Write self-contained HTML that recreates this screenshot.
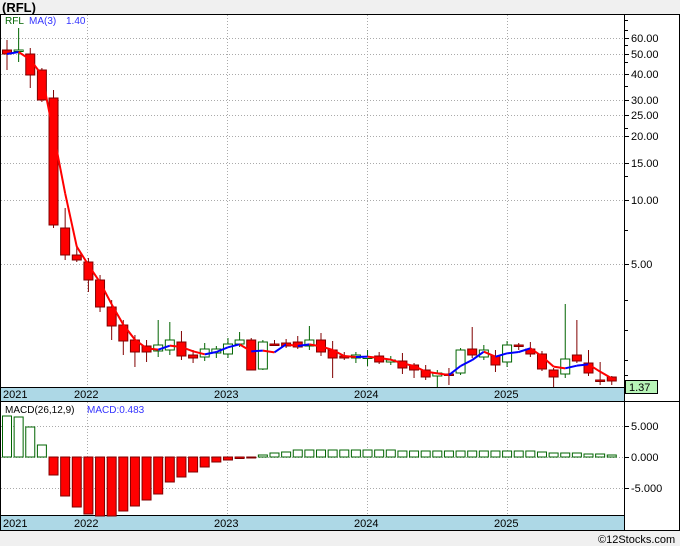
<!DOCTYPE html><html><head><meta charset="utf-8"><style>
body{margin:0;background:#f0f0f0;width:680px;height:546px;overflow:hidden;font-family:"Liberation Sans",sans-serif}
</style></head><body>
<svg id="s" width="680" height="546" xmlns="http://www.w3.org/2000/svg" font-family="Liberation Sans, DejaVu Sans, sans-serif" style="display:block">
<text x="2" y="12" font-size="13" font-weight="bold">(RFL)</text>
<rect x="0.5" y="14.5" width="679" height="516" fill="#fff" stroke="#000"/>
<rect x="1" y="387" width="623" height="14" fill="#add8e6"/>
<rect x="1" y="516" width="623" height="14" fill="#add8e6"/>
<line x1="0" y1="387.5" x2="624" y2="387.5" stroke="#000"/>
<line x1="0" y1="401.5" x2="680" y2="401.5" stroke="#000"/>
<line x1="0" y1="515.5" x2="624" y2="515.5" stroke="#000"/>
<line x1="624.5" y1="14" x2="624.5" y2="530" stroke="#000"/>
<g id="grid" stroke="#aaa" stroke-dasharray="1,2"></g>
<g id="c"></g>
<g font-size="11" fill="#000">
<text x="3" y="398">2021</text><text x="74" y="398">2022</text><text x="214" y="398">2023</text><text x="354" y="398">2024</text><text x="494" y="398">2025</text>
<text x="3" y="527">2021</text><text x="74" y="527">2022</text><text x="214" y="527">2023</text><text x="354" y="527">2024</text><text x="494" y="527">2025</text>
</g>
<text x="5" y="24" font-size="10" fill="#006400">RFL</text><text x="29" y="24" font-size="10" fill="#3333ff">MA(3)</text><text x="66" y="24" font-size="10" fill="#3333ff">1.40</text>
<text x="5" y="413" font-size="10" fill="#000">MACD(26,12,9)</text><text x="87" y="413" font-size="10" fill="#3333ff">MACD:0.483</text>
<rect x="625.5" y="380.5" width="32" height="13" fill="#b8f5b8" stroke="#000"/>
<text x="629" y="391" font-size="11">1.37</text>
<text x="598" y="543" font-size="11">©12Stocks.com</text>
</svg>
<script>
var s=document.getElementById('c'),g=document.getElementById('grid'),h='',gh='';
[87,227,367,507].forEach(function(x){gh+='<line x1="'+x+'.5" y1="15" x2="'+x+'.5" y2="387"/><line x1="'+x+'.5" y1="402" x2="'+x+'.5" y2="515"/>';});
var ax=[[38,'60.00'],[54,'50.00'],[74,'40.00'],[100,'30.00'],[115,'25.00'],[136,'20.00'],[163,'15.00'],[200,'10.00'],[264,'5.00']];
ax.forEach(function(a){gh+='<line x1="1" y1="'+a[0]+'.5" x2="624" y2="'+a[0]+'.5"/>';h+='<line x1="624" y1="'+a[0]+'.5" x2="629" y2="'+a[0]+'.5" stroke="#000"/><text x="631" y="'+(a[0]+4)+'" font-size="11">'+a[1]+'</text>';});
[[426,'5.000'],[457,'0.000'],[488,'-5.000']].forEach(function(a){gh+='<line x1="1" y1="'+a[0]+'.5" x2="624" y2="'+a[0]+'.5"/>';h+='<line x1="624" y1="'+a[0]+'.5" x2="629" y2="'+a[0]+'.5" stroke="#000"/><text x="631" y="'+(a[0]+4)+'" font-size="11">'+a[1]+'</text>';});
[20,30,45,62,86,128,176,230,300,330,360,375].forEach(function(y){h+='<line x1="624" y1="'+y+'.5" x2="628" y2="'+y+'.5" stroke="#000"/>';});
g.innerHTML=gh;
var d=[['r',50,54,40,70],['g',50,51,28,62],['r',54,75,48,88],['r',70,100,68,102],['r',98,225,90,228],['r',228,255,208,260],['r',255,260,245,262],['r',262,280,258,292],['r',280,307,275,312],['r',307,326,300,340],['r',325,341,320,355],['r',340,352,335,367],['r',346,352,340,362],['g',345,351,320,357],['g',340,350,322,355],['r',342,356,331,360],['r',355,358,350,363],['g',349,357,343,361],['g',349,353,346,358],['g',344,354,338,358],['g',340,344,332,347],['r',340,370,338,370],['g',342,369,340,370],['r',344,345,340,346],['r',343,346,339,348],['r',342,347,336,349],['g',340,346,326,350],['r',340,352,333,356],['r',350,358,341,378],['r',356,358,352,360],['g',355,358,352,363],['g',357,358,350,366],['r',356,362,352,364],['g',360,362,356,365],['r',361,368,353,374],['r',365,370,363,378],['r',370,377,365,380],['g',373,376,370,387],['r',374,375,368,385],['g',350,373,348,375],['r',349,355,327,358],['g',350,357,345,360],['r',356,365,350,372],['g',345,362,341,367],['r',345,346,343,350],['r',349,354,342,357],['r',354,369,351,371],['r',370,377,368,387],['g',359,374,304,378],['r',355,361,320,363],['r',363,373,350,376],['r',380,381,362,385],['r',377,381,376,385]];
var X=function(i){return 7+i*11.63;},cl=[];
d.forEach(function(c,i){var x=X(i),gr=c[0]=='g';cl.push(gr?c[1]:c[2]);
h+='<line x1="'+x+'" y1="'+c[3]+'" x2="'+x+'" y2="'+c[4]+'" stroke="'+(gr?'#006400':'#800000')+'"/>';
var bh=Math.max(c[2]-c[1],1.5);
h+='<rect x="'+(x-4.5)+'" y="'+c[1]+'" width="9" height="'+bh+'" fill="'+(gr?'#fff':'#f00')+'" stroke="'+(gr?'#006400':'#800000')+'" stroke-width="1"/>';});
var ma=[];for(var i=0;i<cl.length;i++){var a=cl.slice(Math.max(0,i-2),i+1);ma.push(a.reduce(function(p,q){return p+q},0)/a.length);}
for(var i=1;i<ma.length;i++){h+='<line x1="'+X(i-1)+'" y1="'+ma[i-1]+'" x2="'+X(i)+'" y2="'+ma[i]+'" stroke="'+(ma[i]<ma[i-1]?'#0000ff':'#ff0000')+'" stroke-width="2"/>';}
var m=[416,417,427,445,475,496,507,514,516,516,511,506,500,494,482,477,472,467,462,460,458.5,458,455,453,452,450,450,450,450,450,450,450,450,450,451,451,451,451,451,451,451,451,451,451,451,451,452,453,453,453,454,454,455];
m.forEach(function(y,i){var x=X(i)-4.5;if(y<457){h+='<rect x="'+x+'" y="'+y+'" width="9" height="'+(457-y)+'" fill="#fff" stroke="#006400"/>';}else{h+='<rect x="'+x+'" y="457" width="9" height="'+(y-457)+'" fill="#f00" stroke="#800000"/>';}});
s.innerHTML=h;
</script>
</body></html>
